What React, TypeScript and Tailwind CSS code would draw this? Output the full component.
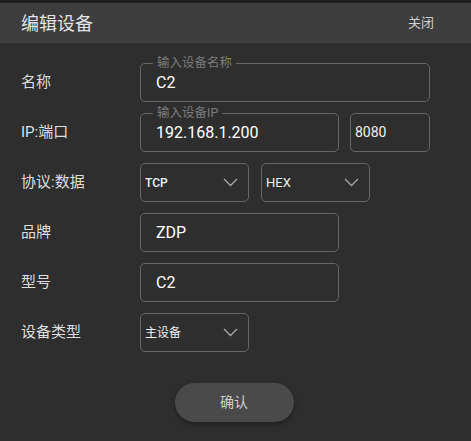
import React from "react";

const font = { fontFamily: 'Roboto, "Noto Sans CJK SC", sans-serif' };

function Chevron() {
  return (
    <svg width="15" height="9" viewBox="0 0 15 9" className="shrink-0">
      <path d="M1 1 L7.5 7.5 L14 1" fill="none" stroke="#a8a8a8" strokeWidth="1.3" />
    </svg>
  );
}

function Label({ children }: { children: React.ReactNode }) {
  return <div className="w-[119px] shrink-0 text-[15px] text-[#dedede]">{children}</div>;
}

function Field({ value, legend, width }: { value: string; legend?: string; width: string }) {
  return (
    <div className={`relative flex h-[39px] items-center rounded-[5px] border border-[#666] px-[15px] ${width}`}>
      {legend && (
        <span className="absolute -top-[9px] left-[12px] bg-[#2e2e2e] px-[4px] text-[12.5px] leading-[15px] text-[#7c7c7c]">
          {legend}
        </span>
      )}
      <span className="text-[16px] text-white">{value}</span>
    </div>
  );
}

function Select({ value, size }: { value: string; size: string }) {
  return (
    <div className="flex h-[39px] w-[109px] items-center justify-between rounded-[5px] border border-[#666] pl-[4px] pr-[10px]">
      <span className={`${size} text-[#f0f0f0]`}>{value}</span>
      <Chevron />
    </div>
  );
}

export default function App() {
  return (
    <div className="flex h-[441px] w-[471px] flex-col bg-[#2e2e2e]" style={font}>
      <div className="h-[3px] bg-[#1e1e1e]" />
      <div className="flex h-[40px] items-center justify-between bg-[#3d3d3d] pl-[21px] pr-[37px]">
        <span className="text-[18px] text-[#e4e4e4]">编辑设备</span>
        <span className="text-[13px] text-[#cfcfcf]">关闭</span>
      </div>
      <div className="flex flex-col gap-[11px] pl-[21px] pt-[20px]">
        <div className="flex items-center">
          <Label>名称</Label>
          <Field value="C2" legend="输入设备名称" width="w-[290px]" />
        </div>
        <div className="flex items-center">
          <Label>IP:端口</Label>
          <Field value="192.168.1.200" legend="输入设备IP" width="w-[199px]" />
          <div className="ml-[11px] flex h-[39px] w-[80px] items-center rounded-[5px] border border-[#666] px-[4px] text-[14px] text-[#f0f0f0]">
            8080
          </div>
        </div>
        <div className="flex items-center">
          <Label>协议:数据</Label>
          <div className="flex gap-[12px]">
            <Select value="TCP" size="text-[12px] font-medium" />
            <Select value="HEX" size="text-[13px]" />
          </div>
        </div>
        <div className="flex items-center">
          <Label>品牌</Label>
          <Field value="ZDP" width="w-[199px]" />
        </div>
        <div className="flex items-center">
          <Label>型号</Label>
          <Field value="C2" width="w-[199px]" />
        </div>
        <div className="flex items-center">
          <Label>设备类型</Label>
          <Select value="主设备" size="text-[12px]" />
        </div>
      </div>
      <div className="flex justify-center pt-[31px]">
        <button className="ml-[-3px] h-[39px] w-[119px] rounded-full bg-[#4a4a4a] text-[14px] text-[#cfcfcf] shadow-[0_2px_4px_rgba(0,0,0,0.35)]">
          确认
        </button>
      </div>
    </div>
  );
}
